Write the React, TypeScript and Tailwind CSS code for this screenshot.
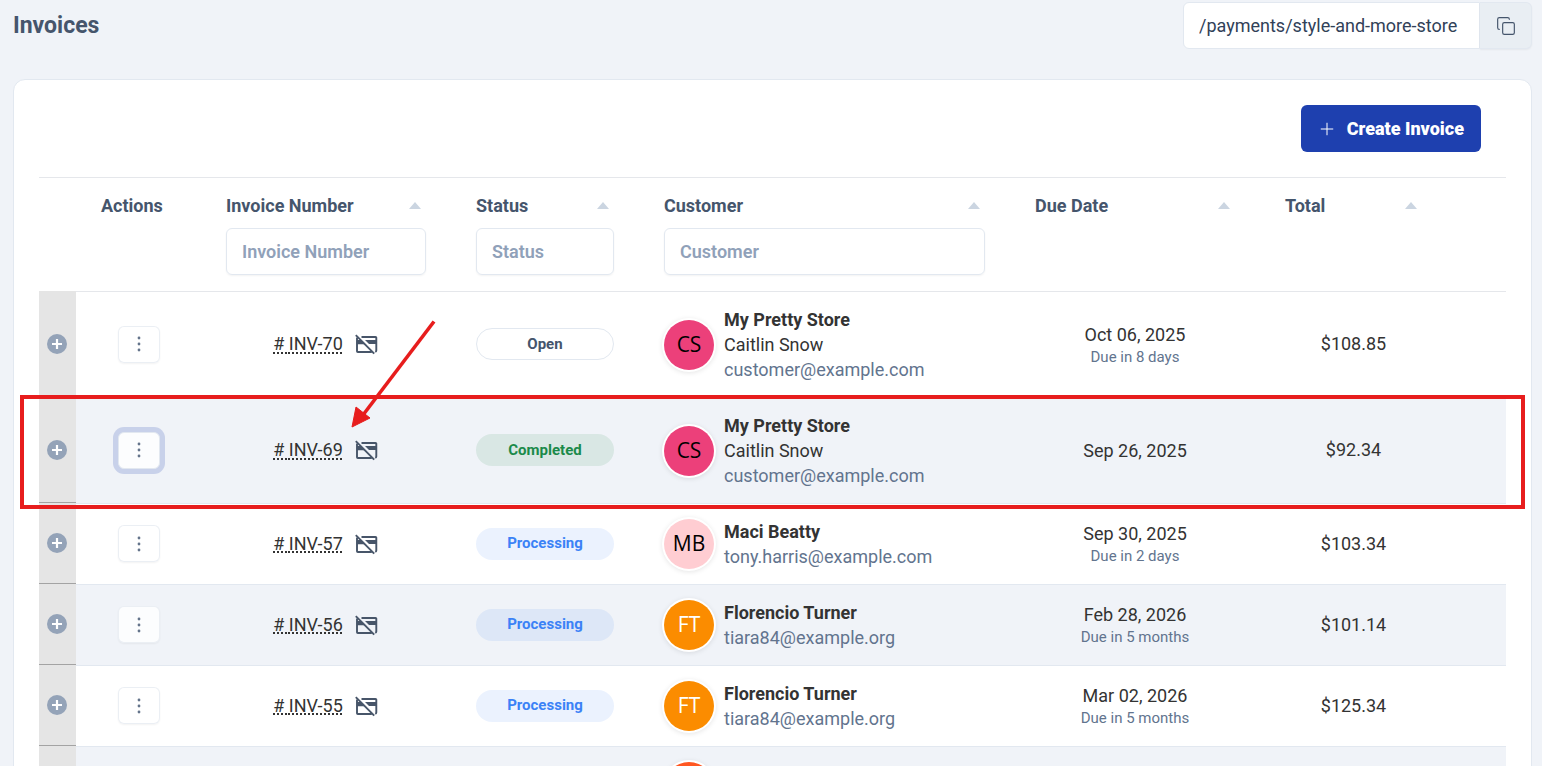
import { Copy, Plus } from "lucide-react";

type Invoice = {
  number?: string;
  status?: string;
  initials?: string;
  avatar: string;
  name?: string;
  contact?: string;
  email?: string;
  date?: string;
  due?: string;
  total?: string;
  marked?: boolean;
};

const PINK = "bg-[#ec407a] text-black";
const ROSE = "bg-[#ffcdd2] text-black";
const ORANGE = "bg-[#fb8c00] text-white";
const DEEP_ORANGE = "bg-[#ff5722] text-white";

const invoices: Invoice[] = [
  { number: "INV-70", status: "Open", initials: "CS", avatar: PINK, name: "My Pretty Store", contact: "Caitlin Snow", email: "customer@example.com", date: "Oct 06, 2025", due: "Due in 8 days", total: "$108.85" },
  { number: "INV-69", status: "Completed", initials: "CS", avatar: PINK, name: "My Pretty Store", contact: "Caitlin Snow", email: "customer@example.com", date: "Sep 26, 2025", total: "$92.34", marked: true },
  { number: "INV-57", status: "Processing", initials: "MB", avatar: ROSE, name: "Maci Beatty", email: "tony.harris@example.com", date: "Sep 30, 2025", due: "Due in 2 days", total: "$103.34" },
  { number: "INV-56", status: "Processing", initials: "FT", avatar: ORANGE, name: "Florencio Turner", email: "tiara84@example.org", date: "Feb 28, 2026", due: "Due in 5 months", total: "$101.14" },
  { number: "INV-55", status: "Processing", initials: "FT", avatar: ORANGE, name: "Florencio Turner", email: "tiara84@example.org", date: "Mar 02, 2026", due: "Due in 5 months", total: "$125.34" },
  { avatar: DEEP_ORANGE },
];

const badgeStyles: Record<string, string> = {
  Open: "border border-slate-200 text-slate-600",
  Completed: "bg-[#16803c]/10 text-[#1b8a4a]",
  Processing: "bg-[#3b82f6]/10 text-[#3b82f6]",
};

function PlusCircle() {
  return (
    <svg viewBox="0 0 20 20" className="block size-5" aria-hidden="true">
      <circle cx="10" cy="10" r="10" fill="#94a3b8" />
      <path d="M10 5v10M5 10h10" stroke="#fff" strokeWidth="2.2" />
    </svg>
  );
}

function Dots() {
  return (
    <svg viewBox="0 0 4 16" className="h-4 w-1" fill="#64748b" aria-hidden="true">
      <circle cx="2" cy="2" r="1.4" />
      <circle cx="2" cy="8" r="1.4" />
      <circle cx="2" cy="14" r="1.4" />
    </svg>
  );
}

function CardOff() {
  return (
    <svg viewBox="0 0 24 24" className="size-6" fill="none" stroke="#475569" aria-hidden="true">
      <path d="M6.500 5H20.500A.8 .8 0 0 1 21.300 5.800V18.500Q21.300 19.300 20.300 19.800" strokeWidth="1.900" />
      <path d="M2 5.500V19.200A.8 .8 0 0 0 2.800 20H16.800" strokeWidth="1.900" />
      <path d="M2 8H5.600L9.800 12.200H2zM10 8H22V12H14z" fill="#475569" stroke="none" />
      <path d="M.8 3.200L19.200 21.600" strokeWidth="1.900" />
    </svg>
  );
}

function HeaderCell({ label, filter }: { label: string; filter?: boolean }) {
  return (
    <th scope="col" className="border-y border-gray-200 px-[25px] pt-[15px] pb-4 text-left align-top font-bold">
      <div className="flex h-[25px] items-center justify-between pr-[5px]">
        <span>{label}</span>
        <svg viewBox="0 0 12 7" className="h-[7px] w-3" fill="#cbd5e1" aria-hidden="true">
          <path d="M6 0l6 7H0z" />
        </svg>
      </div>
      {filter && (
        <input
          type="text"
          aria-label={label}
          placeholder={label}
          className="mt-[10px] block h-[47px] w-full rounded-md border border-slate-200 px-[15px] font-semibold shadow-xs outline-none placeholder:text-slate-400"
        />
      )}
    </th>
  );
}

function Markup() {
  return (
    <>
      <span className="pointer-events-none absolute -inset-x-[19px] -top-[3px] -bottom-[5px] z-10 border-4 border-[#e71d1d]" />
      <svg
        viewBox="0 0 90 112"
        className="pointer-events-none absolute -top-[80px] left-[310px] z-10 h-[112px] w-[90px]"
        aria-hidden="true"
      >
        <path d="M85 3.500L14 97" stroke="#e71d1d" strokeWidth="3.600" fill="none" />
        <path d="M3 109L7 89l14 11z" fill="#e71d1d" stroke="#e71d1d" strokeWidth="1" />
      </svg>
    </>
  );
}

function Row({ item, shaded }: { item: Invoice; shaded: boolean }) {
  const cell = "border-b border-slate-200 px-[25px] py-[15px]";
  const controlCell = "border-b border-slate-200 px-[25px] pt-[15px] pb-4";
  return (
    <tr className={shaded ? "relative bg-[#f0f3f8]" : "relative"}>
      <td className="border-b border-[#e5e5e5] bg-[#e5e5e5] pb-0.5 pl-2 shadow-[inset_0_-1px_#a3a3a3]">
        <button type="button" aria-label="Expand row" className="block">
          <PlusCircle />
        </button>
        {item.marked && <Markup />}
      </td>
      <td className={controlCell}>
        {item.number && (
          <button
            type="button"
            aria-label={`Actions for ${item.number}`}
            className={
              item.marked
                ? "mx-auto flex h-[37px] w-[42px] items-center justify-center rounded-md border border-slate-200 bg-[#fcfdfe] ring-5 ring-[#c8d1ea]"
                : "mx-auto flex h-[37px] w-[42px] items-center justify-center rounded-md border border-slate-200/70 bg-white/80 shadow-xs"
            }
          >
            <Dots />
          </button>
        )}
      </td>
      <td className={controlCell}>
        {item.number && (
          <div className="flex items-center justify-center gap-3 leading-6">
            <a href="#" className="whitespace-nowrap underline decoration-dotted decoration-2 underline-offset-2">
              # {item.number}
            </a>
            <CardOff />
          </div>
        )}
      </td>
      <td className={controlCell}>
        {item.status && (
          <span className={`flex h-8 items-center justify-center rounded-full text-[15px] font-bold ${badgeStyles[item.status]}`}>
            {item.status}
          </span>
        )}
      </td>
      <td className={cell}>
        <div className="flex items-center gap-[10px]">
          <span
            className={`flex size-[50px] shrink-0 items-center justify-center rounded-full font-['Open_Sans',sans-serif] text-[21px] shadow-[0_0_0_2px_#fff,0_1px_5px_2px_#0000001a] ${item.avatar}`}
          >
            {item.initials}
          </span>
          <div className="leading-[25px]">
            <div className="font-bold">{item.name}</div>
            {item.contact && <div>{item.contact}</div>}
            <div className="text-slate-500">{item.email}</div>
          </div>
        </div>
      </td>
      <td className={`${cell} text-center`}>
        <div className="leading-6">{item.date}</div>
        {item.due && <div className="text-[15px] leading-5 text-slate-500">{item.due}</div>}
      </td>
      <td className={`${controlCell} text-center leading-6`}>{item.total}</td>
      <td className="border-b border-slate-200" />
    </tr>
  );
}

export default function App() {
  return (
    <div className="h-screen overflow-hidden bg-[#f0f3f8] pt-0.5 pr-[10px] pl-[13px] font-[Roboto,sans-serif] text-[18px] text-[#333]">
      <header className="flex items-center justify-between">
        <h1 className="pt-0.5 text-[23px] font-bold text-slate-600">Invoices</h1>
        <div className="flex h-[47px]">
          <input
            type="text"
            readOnly
            aria-label="Payment page address"
            value="/payments/style-and-more-store"
            className="w-[297px] rounded-l-md border border-slate-200 bg-white px-[15px] text-slate-700 outline-none"
          />
          <button
            type="button"
            aria-label="Copy address"
            className="flex w-[52px] items-center justify-center rounded-r-md border border-l-0 border-slate-200 bg-[#e9eef3] text-slate-600 shadow-xs"
          >
            <Copy size={20} strokeWidth={1.4} />
          </button>
        </div>
      </header>

      <main className="mt-[30px] rounded-xl border border-slate-200 bg-white px-[25px] pt-[25px]">
        <div className="mb-[25px] flex justify-end pr-[25px]">
          <button
            type="button"
            className="flex h-[47px] items-center gap-[10px] rounded-md bg-[#1e40af] pr-[17px] pl-4 font-black text-white"
          >
            <Plus size={20} strokeWidth={1.2} />
            Create Invoice
          </button>
        </div>

        <table className="w-full table-fixed border-separate border-spacing-0">
          <colgroup>
            <col className="w-[37px]" />
            <col className="w-[125px]" />
            <col className="w-[250px]" />
            <col className="w-[188px]" />
            <col />
            <col className="w-[250px]" />
            <col className="w-[187px]" />
            <col className="w-[59px]" />
          </colgroup>
          <thead className="text-slate-600">
            <tr>
              <th className="border-t border-b border-t-gray-200 border-b-[#e5e5e5]" />
              <th scope="col" className="border-y border-gray-200 px-[25px] pt-[15px] text-left align-top leading-[25px] font-bold">
                Actions
              </th>
              <HeaderCell label="Invoice Number" filter />
              <HeaderCell label="Status" filter />
              <HeaderCell label="Customer" filter />
              <HeaderCell label="Due Date" />
              <HeaderCell label="Total" />
              <th className="border-y border-gray-200" />
            </tr>
          </thead>
          <tbody>
            {invoices.map((item, i) => (
              <Row key={i} item={item} shaded={i % 2 === 1} />
            ))}
          </tbody>
        </table>
      </main>
    </div>
  );
}
